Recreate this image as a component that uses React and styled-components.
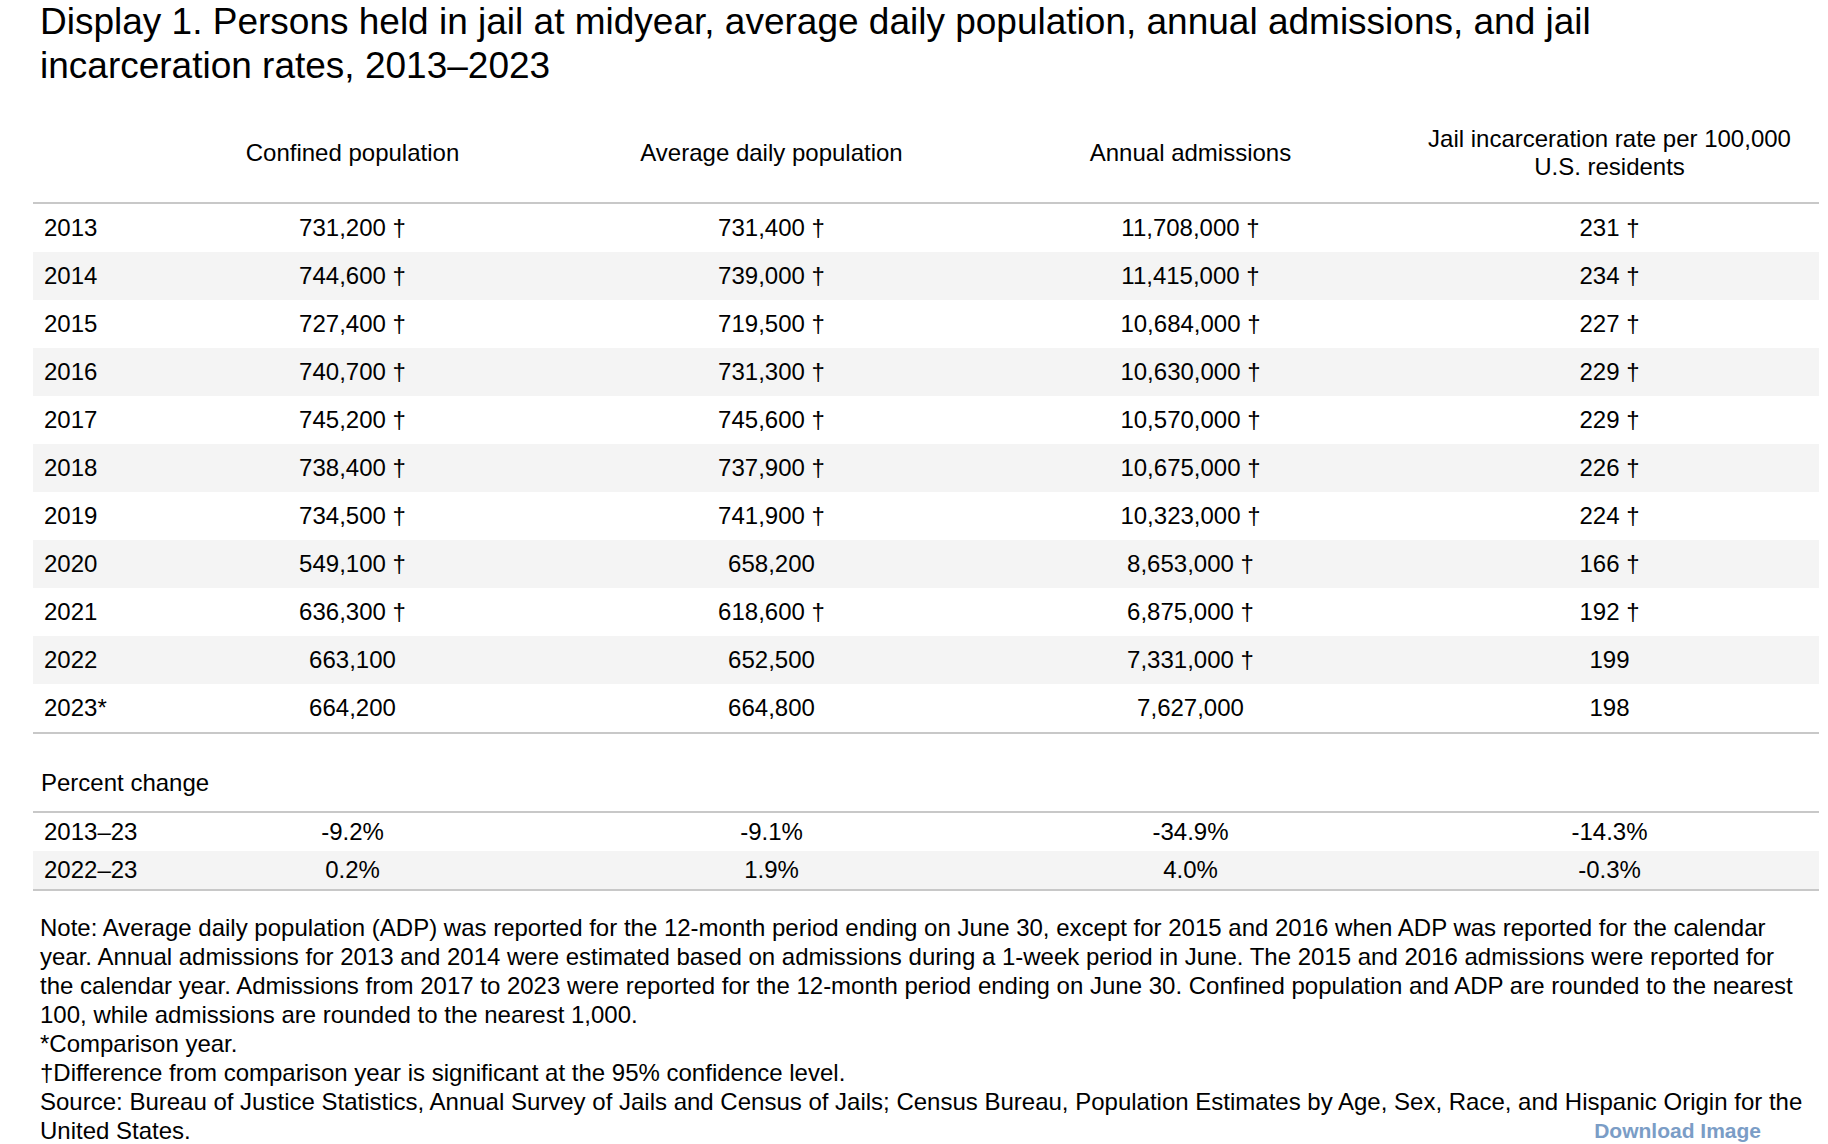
import React from 'react';
import styled, { createGlobalStyle } from 'styled-components';

const GlobalStyle = createGlobalStyle`
  body {
    margin: 0;
    background: #ffffff;
    font-family: "Liberation Sans", Arial, Helvetica, sans-serif;
    color: #000000;
  }
`;

const Page = styled.div`
  width: 1828px;
  box-sizing: border-box;
  padding: 0 9px 0 33px;
`;

const Title = styled.h1`
  margin: 0;
  max-width: 1640px;
  padding: 0 0 0 7px;
  font-size: 37px;
  font-weight: normal;
  line-height: 44px;
`;

const Table = styled.table`
  width: 100%;
  border-collapse: collapse;
  table-layout: fixed;
  font-size: 24px;
  line-height: 28px;
`;

const HeadCell = styled.th`
  font-weight: normal;
  text-align: center;
  vertical-align: middle;
  padding: 37px 10px 21px;
  border-bottom: 2px solid #c8c8c8;
`;

const Row = styled.tr`
  background: ${props => (props.striped ? '#f4f4f4' : 'transparent')};
  border-bottom: ${props => (props.last ? '2px solid #c8c8c8' : 'none')};
`;

const Cell = styled.td`
  text-align: ${props => (props.label ? 'left' : 'center')};
  padding: ${props => (props.compact ? '5px' : '10px')} 0
    ${props => (props.compact ? '5px' : '10px')} ${props => (props.label ? '11px' : '0')};
  white-space: nowrap;
`;

const SectionCell = styled.td`
  padding: 35px 0 14px 8px;
  border-bottom: 2px solid #c8c8c8;
`;

const Notes = styled.div`
  margin-top: 22px;
  padding: 0 14px 0 7px;
  font-size: 24px;
  line-height: 29px;
`;

const NoteLine = styled.p`
  margin: 0;
`;

const Download = styled.a`
  float: right;
  margin-right: 44px;
  font-size: 21px;
  font-weight: bold;
  color: #7b9dc6;
  text-decoration: none;
  cursor: pointer;
`;

const columns = [
  'Confined population',
  'Average daily population',
  'Annual admissions',
  'Jail incarceration rate per 100,000 U.S. residents',
];

const rows = [
  ['2013', '731,200 †', '731,400 †', '11,708,000 †', '231 †'],
  ['2014', '744,600 †', '739,000 †', '11,415,000 †', '234 †'],
  ['2015', '727,400 †', '719,500 †', '10,684,000 †', '227 †'],
  ['2016', '740,700 †', '731,300 †', '10,630,000 †', '229 †'],
  ['2017', '745,200 †', '745,600 †', '10,570,000 †', '229 †'],
  ['2018', '738,400 †', '737,900 †', '10,675,000 †', '226 †'],
  ['2019', '734,500 †', '741,900 †', '10,323,000 †', '224 †'],
  ['2020', '549,100 †', '658,200', '8,653,000 †', '166 †'],
  ['2021', '636,300 †', '618,600 †', '6,875,000 †', '192 †'],
  ['2022', '663,100', '652,500', '7,331,000 †', '199'],
  ['2023*', '664,200', '664,800', '7,627,000', '198'],
];

const changes = [
  ['2013–23', '-9.2%', '-9.1%', '-34.9%', '-14.3%'],
  ['2022–23', '0.2%', '1.9%', '4.0%', '-0.3%'],
];

export default function App() {
  return (
    <>
      <GlobalStyle />
      <Page>
        <Title>
          Display 1. Persons held in jail at midyear, average daily population, annual admissions, and jail
          incarceration rates, 2013–2023
        </Title>
        <Table>
          <colgroup>
            <col style={{ width: '110px' }} />
            <col />
            <col />
            <col />
            <col />
          </colgroup>
          <thead>
            <tr>
              <HeadCell />
              {columns.map(c => (
                <HeadCell key={c}>{c}</HeadCell>
              ))}
            </tr>
          </thead>
          <tbody>
            {rows.map((r, i) => (
              <Row key={r[0]} striped={i % 2 === 1} last={i === rows.length - 1}>
                {r.map((v, j) => (
                  <Cell key={j} label={j === 0}>
                    {v}
                  </Cell>
                ))}
              </Row>
            ))}
            <tr>
              <SectionCell colSpan={5}>Percent change</SectionCell>
            </tr>
            {changes.map((r, i) => (
              <Row key={r[0]} striped={i % 2 === 1} last={i === changes.length - 1}>
                {r.map((v, j) => (
                  <Cell key={j} label={j === 0} compact>
                    {v}
                  </Cell>
                ))}
              </Row>
            ))}
          </tbody>
        </Table>
        <Notes>
          <NoteLine>
            Note: Average daily population (ADP) was reported for the 12-month period ending on June 30, except for
            2015 and 2016 when ADP was reported for the calendar year. Annual admissions for 2013 and 2014 were
            estimated based on admissions during a 1-week period in June. The 2015 and 2016 admissions were reported
            for the calendar year. Admissions from 2017 to 2023 were reported for the 12-month period ending on June
            30. Confined population and ADP are rounded to the nearest 100, while admissions are rounded to the
            nearest 1,000.
          </NoteLine>
          <NoteLine>*Comparison year.</NoteLine>
          <NoteLine>†Difference from comparison year is significant at the 95% confidence level.</NoteLine>
          <NoteLine>
            Source: Bureau of Justice Statistics, Annual Survey of Jails and Census of Jails; Census Bureau,
            Population Estimates by Age, Sex, Race, and Hispanic Origin for the United States.
            <Download>Download Image</Download>
          </NoteLine>
        </Notes>
      </Page>
    </>
  );
}
